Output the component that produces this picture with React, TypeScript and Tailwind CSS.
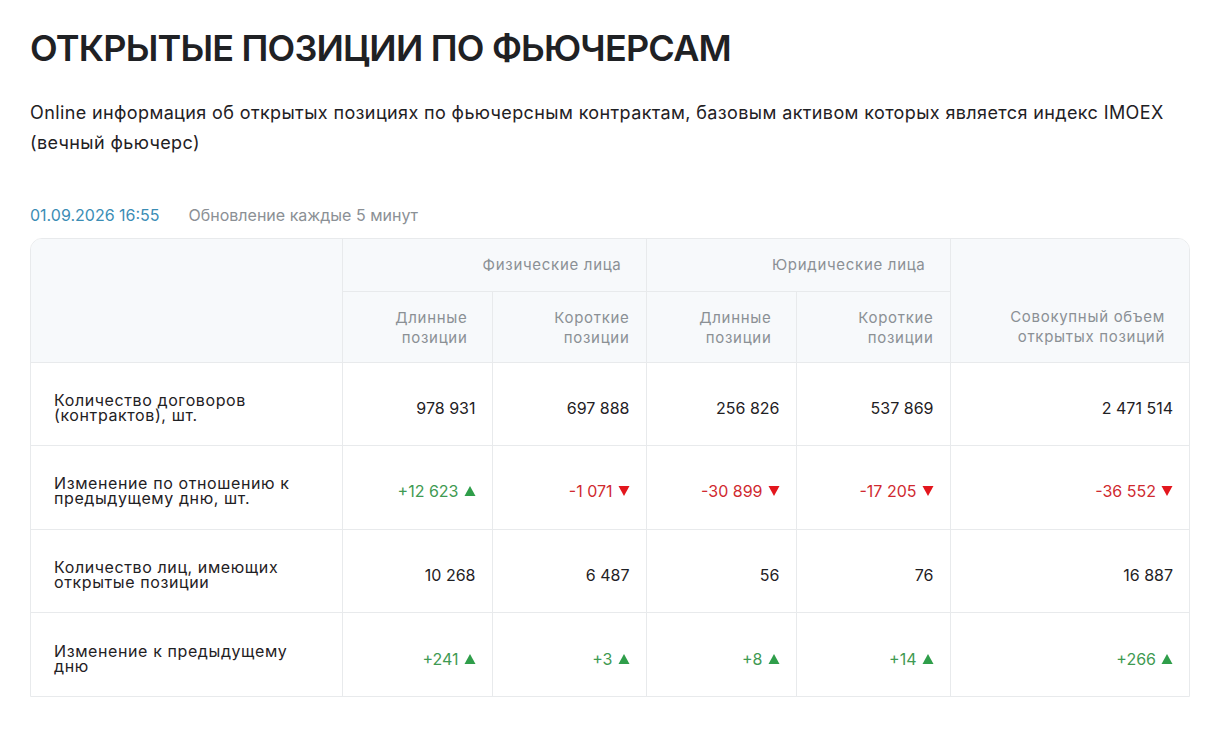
import React from 'react';

type Cell = { value: string; trend?: 'up' | 'down' };

const rows: { label: string; cells: Cell[] }[] = [
  {
    label: 'Количество договоров (контрактов), шт.',
    cells: [{ value: '978 931' }, { value: '697 888' }, { value: '256 826' }, { value: '537 869' }, { value: '2 471 514' }],
  },
  {
    label: 'Изменение по отношению к предыдущему дню, шт.',
    cells: [
      { value: '+12 623', trend: 'up' },
      { value: '-1 071', trend: 'down' },
      { value: '-30 899', trend: 'down' },
      { value: '-17 205', trend: 'down' },
      { value: '-36 552', trend: 'down' },
    ],
  },
  {
    label: 'Количество лиц, имеющих открытые позиции',
    cells: [{ value: '10 268' }, { value: '6 487' }, { value: '56' }, { value: '76' }, { value: '16 887' }],
  },
  {
    label: 'Изменение к предыдущему дню',
    cells: [
      { value: '+241', trend: 'up' },
      { value: '+3', trend: 'up' },
      { value: '+8', trend: 'up' },
      { value: '+14', trend: 'up' },
      { value: '+266', trend: 'up' },
    ],
  },
];

function Triangle({ dir }: { dir: 'up' | 'down' }) {
  return (
    <svg width="12" height="12" viewBox="0 0 12 12" className="ml-[5px] inline-block">
      {dir === 'up' ? (
        <path d="M6 1 L11.5 11 H0.5 Z" fill="#2f9e4a" />
      ) : (
        <path d="M0.5 1 H11.5 L6 11 Z" fill="#e3161d" />
      )}
    </svg>
  );
}

function ValueCell({ cell }: { cell: Cell }) {
  const color =
    cell.trend === 'up' ? 'text-[#3f9a52]' : cell.trend === 'down' ? 'text-[#d02a30]' : 'text-[#1f2124]';
  return (
    <td className="border border-[#e8eaec] pr-4 pt-2 text-right align-middle">
      <span className={`inline-flex items-center ${color}`}>
        {cell.value}
        {cell.trend ? <Triangle dir={cell.trend} /> : null}
      </span>
    </td>
  );
}

export default function App() {
  return (
    <div className="min-h-[729px] bg-white px-[30px] pt-[26px] font-['Inter',sans-serif] text-[#1f2124]">
      <h1 className="text-[36px] font-semibold leading-[44px] tracking-[-0.8px]">ОТКРЫТЫЕ ПОЗИЦИИ ПО ФЬЮЧЕРСАМ</h1>
      <p className="mt-[28px] text-[18px] leading-[30px] tracking-[0.38px]">
        Online информация об открытых позициях по фьючерсным контрактам, базовым активом которых является индекс IMOEX
        (вечный фьючерс)
      </p>

      <div className="mt-[47px] flex items-center gap-[29px] text-[16px] leading-[20px]">
        <span className="text-[#3b8db5]">01.09.2026 16:55</span>
        <span className="text-[#8b9095]">Обновление каждые 5 минут</span>
      </div>

      <div className="mt-[13px] w-[1160px] overflow-hidden rounded-t-[12px] border border-[#e8eaec]">
        <table className="w-full table-fixed border-collapse border-hidden text-[16px]">
          <colgroup>
            <col className="w-[311px]" />
            <col className="w-[150px]" />
            <col className="w-[154px]" />
            <col className="w-[150px]" />
            <col className="w-[154px]" />
            <col />
          </colgroup>
          <thead className="bg-[#f7f9fb] text-[15px] font-normal leading-[20px] tracking-[0.7px] text-[#8b9095]">
            <tr className="h-[52px]">
              <th rowSpan={2} className="border border-[#e8eaec]" />
              <th colSpan={2} className="border border-[#e8eaec] pr-6 text-right font-normal">
                Физические лица
              </th>
              <th colSpan={2} className="border border-[#e8eaec] pr-6 text-right font-normal">
                Юридические лица
              </th>
              <th rowSpan={2} className="border border-[#e8eaec] pr-6 pt-[53px] text-right align-middle font-normal">
                Совокупный объем
                <br />
                открытых позиций
              </th>
            </tr>
            <tr className="h-[71px]">
              <th className="border border-[#e8eaec] pr-6 pt-0.5 text-right font-normal">
                Длинные
                <br />
                позиции
              </th>
              <th className="border border-[#e8eaec] pr-4 pt-0.5 text-right font-normal">
                Короткие
                <br />
                позиции
              </th>
              <th className="border border-[#e8eaec] pr-6 pt-0.5 text-right font-normal">
                Длинные
                <br />
                позиции
              </th>
              <th className="border border-[#e8eaec] pr-4 pt-0.5 text-right font-normal">
                Короткие
                <br />
                позиции
              </th>
            </tr>
          </thead>
          <tbody>
            {rows.map((row) => (
              <tr key={row.label} className="h-[83.5px]">
                <td className="border border-[#e8eaec] pl-[23px] pr-10 pt-2 align-middle leading-[15px] tracking-[0.6px]">
                  {row.label}
                </td>
                {row.cells.map((cell, i) => (
                  <ValueCell key={i} cell={cell} />
                ))}
              </tr>
            ))}
          </tbody>
        </table>
      </div>
    </div>
  );
}
